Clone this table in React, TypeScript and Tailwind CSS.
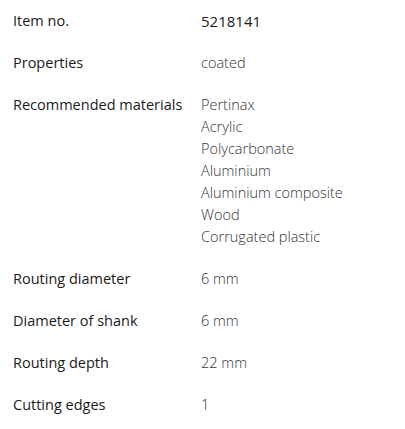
const rows: { label: string; values: string[]; strong?: boolean }[] = [
  { label: "Item no.", values: ["5218141"], strong: true },
  { label: "Properties", values: ["coated"] },
  {
    label: "Recommended materials",
    values: [
      "Pertinax",
      "Acrylic",
      "Polycarbonate",
      "Aluminium",
      "Aluminium composite",
      "Wood",
      "Corrugated plastic",
    ],
  },
  { label: "Routing diameter", values: ["6 mm"] },
  { label: "Diameter of shank", values: ["6 mm"] },
  { label: "Routing depth", values: ["22 mm"] },
  { label: "Cutting edges", values: ["1"] },
]

export default function App() {
  return (
    <div className="min-h-[429px] w-[405px] bg-white pt-[10px] font-['Open_Sans',sans-serif] text-[14.5px] leading-[22px]">
      <dl className="flex flex-col gap-5">
        {rows.map((row) => (
          <div key={row.label} className="flex">
            <dt className="w-[201px] shrink-0 pl-[13px] font-medium text-[#1a1a1a]">
              {row.label}
            </dt>
            <dd
              className={
                row.strong
                  ? "text-[15px] font-normal text-[#1a1a1a]"
                  : "font-light text-[#333]"
              }
            >
              {row.values.map((v) => (
                <div key={v}>{v}</div>
              ))}
            </dd>
          </div>
        ))}
      </dl>
    </div>
  )
}
